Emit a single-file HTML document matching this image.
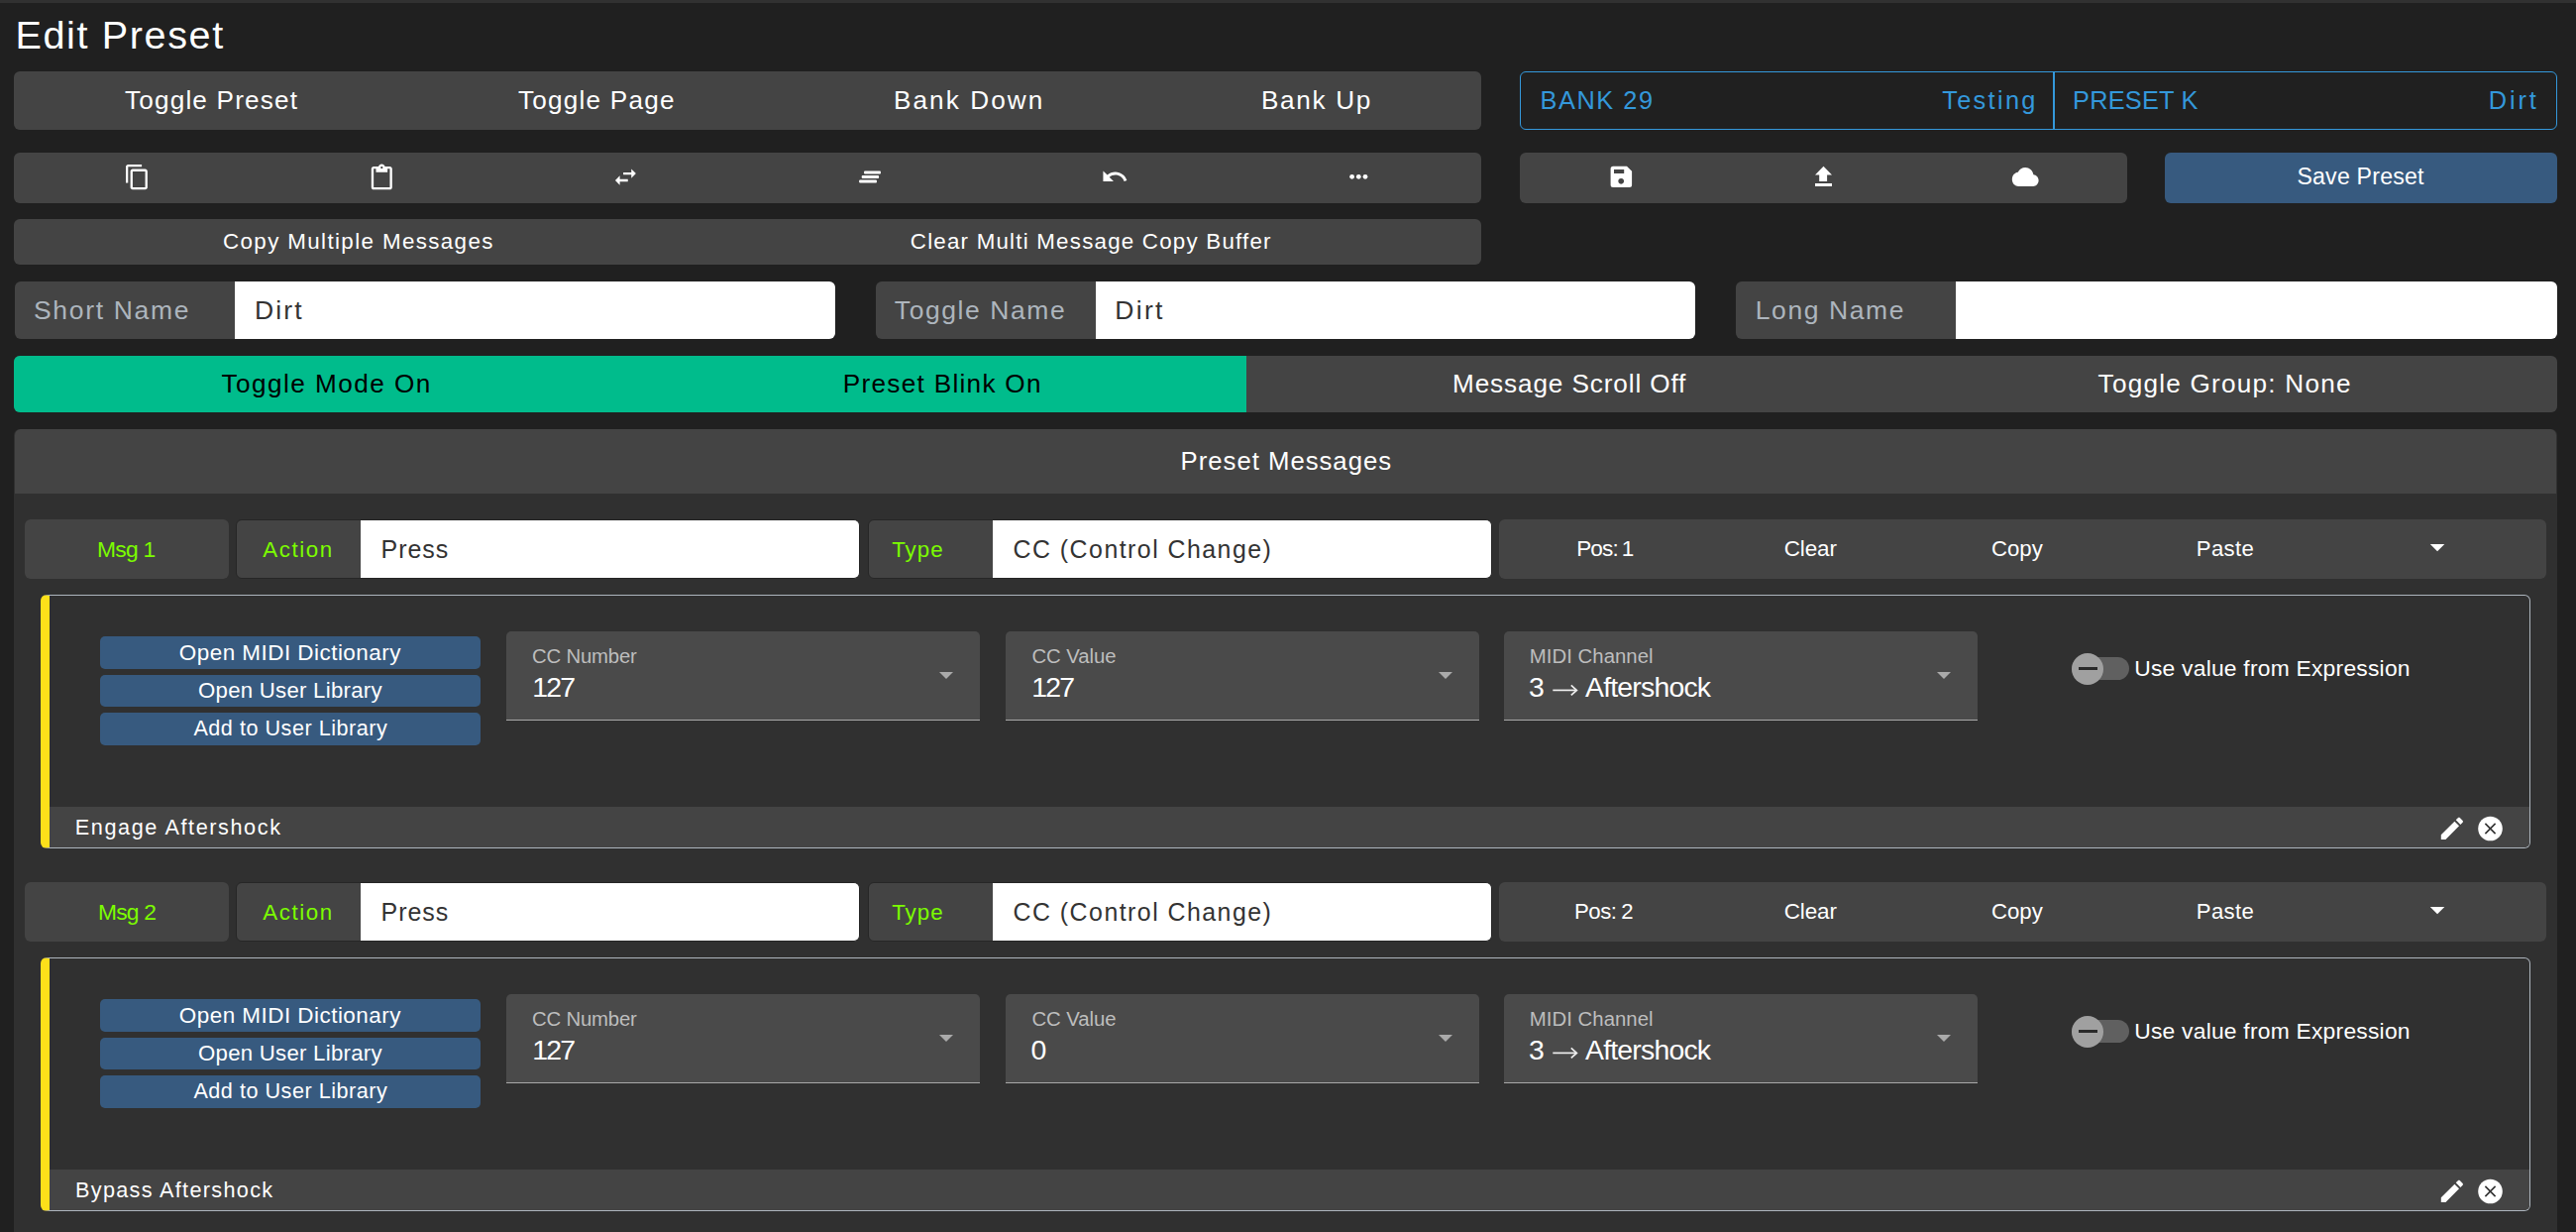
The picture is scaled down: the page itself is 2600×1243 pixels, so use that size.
<!DOCTYPE html>
<html><head><meta charset="utf-8">
<style>
*{box-sizing:border-box;margin:0;padding:0}
html,body{width:2600px;height:1243px;overflow:hidden;background:#202020;font-family:"Liberation Sans",sans-serif;color:#fff}
.a{position:absolute}
.t{position:absolute;white-space:nowrap;line-height:1}
svg.ov{position:absolute;left:0;top:0}
</style></head><body>
<div class="a" style="left:0px;top:0px;width:2600px;height:3px;background:#313131;border-radius:0;"></div>
<div class="t" style="left:15.40px;top:15.80px;font-size:39.59px;letter-spacing:1.620px;color:#fff">Edit Preset</div>
<div class="a" style="left:14px;top:72px;width:1481px;height:59px;background:#444;border-radius:6px;"></div>
<div class="t" style="left:126.00px;top:87.85px;font-size:26.16px;letter-spacing:1.167px;color:#fff">Toggle Preset</div>
<div class="t" style="left:523.00px;top:87.85px;font-size:26.16px;letter-spacing:1.200px;color:#fff">Toggle Page</div>
<div class="t" style="left:902.00px;top:87.85px;font-size:26.16px;letter-spacing:2.062px;color:#fff">Bank Down</div>
<div class="t" style="left:1273.00px;top:87.85px;font-size:26.16px;letter-spacing:1.667px;color:#fff">Bank Up</div>
<div class="a" style="left:1534px;top:72px;width:1047px;height:59px;background:transparent;border-radius:6px;border:1px solid #3498db"></div>
<div class="a" style="left:2072px;top:72px;width:2px;height:59px;background:#3498db;border-radius:0;"></div>
<div class="t" style="left:1554.60px;top:89.24px;font-size:25.35px;letter-spacing:1.533px;color:#3498db">BANK 29</div>
<div class="t" style="left:1960.20px;top:89.24px;font-size:25.35px;letter-spacing:2.317px;color:#3498db">Testing</div>
<div class="t" style="left:2092.00px;top:89.24px;font-size:25.35px;letter-spacing:0.229px;color:#3498db">PRESET K</div>
<div class="t" style="left:2511.80px;top:89.24px;font-size:25.35px;letter-spacing:2.867px;color:#3498db">Dirt</div>
<div class="a" style="left:14px;top:154px;width:1481px;height:51px;background:#444;border-radius:6px;"></div>
<div class="a" style="left:1534px;top:154px;width:613px;height:51px;background:#444;border-radius:6px;"></div>
<div class="a" style="left:2185px;top:154px;width:396px;height:51px;background:#375a7f;border-radius:6px;"></div>
<div class="t" style="left:2318.40px;top:167.02px;font-size:23.16px;letter-spacing:0.200px;color:#fff">Save Preset</div>
<div class="a" style="left:14px;top:221px;width:1481px;height:46px;background:#444;border-radius:6px;"></div>
<div class="t" style="left:225.00px;top:232.78px;font-size:22.35px;letter-spacing:1.381px;color:#fff">Copy Multiple Messages</div>
<div class="t" style="left:918.80px;top:232.78px;font-size:22.35px;letter-spacing:1.210px;color:#fff">Clear Multi Message Copy Buffer</div>
<div class="a" style="left:15px;top:284px;width:223px;height:58px;background:#444;border-radius:6px 0 0 6px;"></div>
<div class="a" style="left:237px;top:284px;width:606px;height:58px;background:#fff;border-radius:0 6px 6px 0;"></div>
<div class="a" style="left:884px;top:284px;width:223px;height:58px;background:#444;border-radius:6px 0 0 6px;"></div>
<div class="a" style="left:1106px;top:284px;width:605px;height:58px;background:#fff;border-radius:0 6px 6px 0;"></div>
<div class="a" style="left:1752px;top:284px;width:223px;height:58px;background:#444;border-radius:6px 0 0 6px;"></div>
<div class="a" style="left:1974px;top:284px;width:607px;height:58px;background:#fff;border-radius:0 6px 6px 0;"></div>
<div class="t" style="left:34.00px;top:300.11px;font-size:26.50px;letter-spacing:1.678px;color:#adb5bd">Short Name</div>
<div class="t" style="left:257.00px;top:300.11px;font-size:26.50px;letter-spacing:2.167px;color:#333">Dirt</div>
<div class="t" style="left:902.80px;top:300.11px;font-size:26.50px;letter-spacing:1.580px;color:#adb5bd">Toggle Name</div>
<div class="t" style="left:1125.20px;top:300.11px;font-size:26.50px;letter-spacing:2.333px;color:#333">Dirt</div>
<div class="t" style="left:1771.80px;top:300.11px;font-size:26.50px;letter-spacing:1.587px;color:#adb5bd">Long Name</div>
<div class="a" style="left:14px;top:359px;width:2567px;height:57px;background:#444;border-radius:6px;"></div>
<div class="a" style="left:14px;top:359px;width:1244px;height:57px;background:#00bc8c;border-radius:6px 0 0 6px;"></div>
<div class="t" style="left:223.60px;top:373.85px;font-size:26.16px;letter-spacing:1.446px;color:#000">Toggle Mode On</div>
<div class="t" style="left:850.80px;top:373.85px;font-size:26.16px;letter-spacing:1.286px;color:#000">Preset Blink On</div>
<div class="t" style="left:1466.00px;top:373.85px;font-size:26.16px;letter-spacing:0.876px;color:#fff">Message Scroll Off</div>
<div class="t" style="left:2117.60px;top:373.85px;font-size:26.16px;letter-spacing:1.224px;color:#fff">Toggle Group: None</div>
<div class="a" style="left:14px;top:433px;width:2567px;height:830px;background:#303030;border-radius:6px 6px 0 0;"></div>
<div class="a" style="left:15px;top:433px;width:2565px;height:65px;background:#444;border-radius:6px 6px 0 0;"></div>
<div class="t" style="left:1191.60px;top:452.59px;font-size:25.76px;letter-spacing:0.971px;color:#fff">Preset Messages</div>
<div class="a" style="left:0;top:524px;width:2600px;height:400px">
<div class="a" style="left:25px;top:0px;width:206px;height:60px;background:#444;border-radius:6px;"></div>
<div class="a" style="left:238px;top:0px;width:127px;height:60px;background:#444;border-radius:6px 0 0 6px;border:1px solid #262626"></div>
<div class="a" style="left:364px;top:0px;width:504px;height:60px;background:#fff;border-radius:0 6px 6px 0;border:1px solid #262626;border-left:0"></div>
<div class="a" style="left:876px;top:0px;width:127px;height:60px;background:#444;border-radius:6px 0 0 6px;border:1px solid #262626"></div>
<div class="a" style="left:1002px;top:0px;width:504px;height:60px;background:#fff;border-radius:0 6px 6px 0;border:1px solid #262626;border-left:0"></div>
<div class="a" style="left:1513px;top:0px;width:1057px;height:60px;background:#444;border-radius:6px;"></div>
<div class="a" style="left:41px;top:76px;width:2513px;height:256px;border:1px solid #adb5bd;border-left:9px solid #fde01a;border-radius:6px;overflow:hidden">
<div class="a" style="left:0px;top:213px;width:2504px;height:41px;background:#444;border-radius:0;"></div>
</div>
<div class="a" style="left:101px;top:118px;width:384px;height:33px;background:#375a7f;border-radius:5px;"></div>
<div class="a" style="left:101px;top:157px;width:384px;height:32px;background:#375a7f;border-radius:5px;"></div>
<div class="a" style="left:101px;top:195px;width:384px;height:33px;background:#375a7f;border-radius:5px;"></div>
<div class="a" style="left:511px;top:113px;width:478px;height:90px;background:#4a4a4a;border-radius:5px 5px 0 0;border-bottom:1px solid #a8a8a8"></div>
<div class="a" style="left:1015px;top:113px;width:478px;height:90px;background:#4a4a4a;border-radius:5px 5px 0 0;border-bottom:1px solid #a8a8a8"></div>
<div class="a" style="left:1518px;top:113px;width:478px;height:90px;background:#4a4a4a;border-radius:5px 5px 0 0;border-bottom:1px solid #a8a8a8"></div>
<div class="a" style="left:2091px;top:139px;width:58px;height:23px;background:#606060;border-radius:12px;"></div>
<div class="a" style="left:2091px;top:135px;width:32px;height:32px;background:#a0a0a0;border-radius:50%;"></div>
<div class="a" style="left:2098px;top:149px;width:19px;height:2.5px;background:#2a2a2a;border-radius:0;"></div>
</div>
<div class="t" style="left:98.00px;top:543.35px;font-size:22.86px;letter-spacing:-0.775px;color:#7cfc00">Msg 1</div>
<div class="t" style="left:265.20px;top:544.32px;font-size:22.35px;letter-spacing:1.600px;color:#7cfc00">Action</div>
<div class="t" style="left:384.60px;top:542.22px;font-size:24.98px;letter-spacing:0.925px;color:#333">Press</div>
<div class="t" style="left:900.20px;top:544.32px;font-size:22.35px;letter-spacing:1.000px;color:#7cfc00">Type</div>
<div class="t" style="left:1022.60px;top:542.19px;font-size:24.91px;letter-spacing:1.461px;color:#333">CC (Control Change)</div>
<div class="t" style="left:1591.20px;top:543.27px;font-size:22.60px;letter-spacing:-0.900px;color:#fff">Pos:</div>
<div class="t" style="left:1636.80px;top:542.98px;font-size:22.48px;letter-spacing:-14.100px;color:#fff">1</div>
<div class="t" style="left:1800.80px;top:543.12px;font-size:22.47px;letter-spacing:-0.150px;color:#fff">Clear</div>
<div class="t" style="left:2010.00px;top:543.48px;font-size:22.19px;letter-spacing:0.000px;color:#fff">Copy</div>
<div class="t" style="left:2216.80px;top:543.34px;font-size:22.15px;letter-spacing:0.350px;color:#fff">Paste</div>
<div class="t" style="left:180.80px;top:647.92px;font-size:22.46px;letter-spacing:0.474px;color:#fff">Open MIDI Dictionary</div>
<div class="t" style="left:200.00px;top:686.13px;font-size:22.21px;letter-spacing:0.256px;color:#fff">Open User Library</div>
<div class="t" style="left:195.40px;top:724.37px;font-size:21.61px;letter-spacing:0.511px;color:#fff">Add to User Library</div>
<div class="t" style="left:75.80px;top:824.38px;font-size:21.65px;letter-spacing:1.594px;color:#fff">Engage Aftershock</div>
<div class="t" style="left:537.00px;top:651.77px;font-size:20.35px;letter-spacing:-0.188px;color:#bdbdbd">CC Number</div>
<div class="t" style="left:1041.40px;top:651.77px;font-size:20.35px;letter-spacing:-0.057px;color:#bdbdbd">CC Value</div>
<div class="t" style="left:1543.80px;top:651.77px;font-size:20.35px;letter-spacing:0.036px;color:#bdbdbd">MIDI Channel</div>
<div class="t" style="left:537.20px;top:678.85px;font-size:28.43px;letter-spacing:-1.750px;color:#fff">127</div>
<div class="t" style="left:1041.20px;top:678.85px;font-size:28.43px;letter-spacing:-1.750px;color:#fff">127</div>
<div class="t" style="left:1543.00px;top:678.85px;font-size:28.43px;letter-spacing:-6.500px;color:#fff">3</div>
<div class="t" style="left:1600.00px;top:678.85px;font-size:28.43px;letter-spacing:-0.800px;color:#fff">Aftershock</div>
<div class="t" style="left:2154.20px;top:663.43px;font-size:22.86px;letter-spacing:0.217px;color:#fff">Use value from Expression</div>
<div class="a" style="left:0;top:890px;width:2600px;height:400px">
<div class="a" style="left:25px;top:0px;width:206px;height:60px;background:#444;border-radius:6px;"></div>
<div class="a" style="left:238px;top:0px;width:127px;height:60px;background:#444;border-radius:6px 0 0 6px;border:1px solid #262626"></div>
<div class="a" style="left:364px;top:0px;width:504px;height:60px;background:#fff;border-radius:0 6px 6px 0;border:1px solid #262626;border-left:0"></div>
<div class="a" style="left:876px;top:0px;width:127px;height:60px;background:#444;border-radius:6px 0 0 6px;border:1px solid #262626"></div>
<div class="a" style="left:1002px;top:0px;width:504px;height:60px;background:#fff;border-radius:0 6px 6px 0;border:1px solid #262626;border-left:0"></div>
<div class="a" style="left:1513px;top:0px;width:1057px;height:60px;background:#444;border-radius:6px;"></div>
<div class="a" style="left:41px;top:76px;width:2513px;height:256px;border:1px solid #adb5bd;border-left:9px solid #fde01a;border-radius:6px;overflow:hidden">
<div class="a" style="left:0px;top:213px;width:2504px;height:41px;background:#444;border-radius:0;"></div>
</div>
<div class="a" style="left:101px;top:118px;width:384px;height:33px;background:#375a7f;border-radius:5px;"></div>
<div class="a" style="left:101px;top:157px;width:384px;height:32px;background:#375a7f;border-radius:5px;"></div>
<div class="a" style="left:101px;top:195px;width:384px;height:33px;background:#375a7f;border-radius:5px;"></div>
<div class="a" style="left:511px;top:113px;width:478px;height:90px;background:#4a4a4a;border-radius:5px 5px 0 0;border-bottom:1px solid #a8a8a8"></div>
<div class="a" style="left:1015px;top:113px;width:478px;height:90px;background:#4a4a4a;border-radius:5px 5px 0 0;border-bottom:1px solid #a8a8a8"></div>
<div class="a" style="left:1518px;top:113px;width:478px;height:90px;background:#4a4a4a;border-radius:5px 5px 0 0;border-bottom:1px solid #a8a8a8"></div>
<div class="a" style="left:2091px;top:139px;width:58px;height:23px;background:#606060;border-radius:12px;"></div>
<div class="a" style="left:2091px;top:135px;width:32px;height:32px;background:#a0a0a0;border-radius:50%;"></div>
<div class="a" style="left:2098px;top:149px;width:19px;height:2.5px;background:#2a2a2a;border-radius:0;"></div>
</div>
<div class="t" style="left:128.15px;top:908.68px;font-size:22.82px;letter-spacing:-0.775px;color:#7cfc00;transform:translateX(-50%)">Msg 2</div>
<div class="t" style="left:265.20px;top:910.32px;font-size:22.35px;letter-spacing:1.600px;color:#7cfc00">Action</div>
<div class="t" style="left:384.60px;top:908.22px;font-size:24.98px;letter-spacing:0.925px;color:#333">Press</div>
<div class="t" style="left:900.20px;top:910.32px;font-size:22.35px;letter-spacing:1.000px;color:#7cfc00">Type</div>
<div class="t" style="left:1022.60px;top:908.19px;font-size:24.91px;letter-spacing:1.461px;color:#333">CC (Control Change)</div>
<div class="t" style="left:1589.00px;top:909.33px;font-size:22.21px;letter-spacing:-0.483px;color:#fff">Pos:</div>
<div class="t" style="left:1636.20px;top:909.35px;font-size:22.18px;letter-spacing:-0.800px;color:#fff">2</div>
<div class="t" style="left:1800.80px;top:909.12px;font-size:22.47px;letter-spacing:-0.150px;color:#fff">Clear</div>
<div class="t" style="left:2010.00px;top:909.48px;font-size:22.19px;letter-spacing:0.000px;color:#fff">Copy</div>
<div class="t" style="left:2216.80px;top:909.34px;font-size:22.15px;letter-spacing:0.350px;color:#fff">Paste</div>
<div class="t" style="left:180.80px;top:1013.92px;font-size:22.46px;letter-spacing:0.474px;color:#fff">Open MIDI Dictionary</div>
<div class="t" style="left:200.00px;top:1052.13px;font-size:22.21px;letter-spacing:0.256px;color:#fff">Open User Library</div>
<div class="t" style="left:195.40px;top:1090.37px;font-size:21.61px;letter-spacing:0.511px;color:#fff">Add to User Library</div>
<div class="t" style="left:76.00px;top:1190.38px;font-size:21.65px;letter-spacing:1.319px;color:#fff">Bypass Aftershock</div>
<div class="t" style="left:537.00px;top:1017.77px;font-size:20.35px;letter-spacing:-0.188px;color:#bdbdbd">CC Number</div>
<div class="t" style="left:1041.40px;top:1017.77px;font-size:20.35px;letter-spacing:-0.057px;color:#bdbdbd">CC Value</div>
<div class="t" style="left:1543.80px;top:1017.77px;font-size:20.35px;letter-spacing:0.036px;color:#bdbdbd">MIDI Channel</div>
<div class="t" style="left:537.20px;top:1044.85px;font-size:28.43px;letter-spacing:-1.750px;color:#fff">127</div>
<div class="t" style="left:1040.60px;top:1044.85px;font-size:28.43px;letter-spacing:-16.500px;color:#fff">0</div>
<div class="t" style="left:1543.00px;top:1044.85px;font-size:28.43px;letter-spacing:-6.500px;color:#fff">3</div>
<div class="t" style="left:1600.00px;top:1044.85px;font-size:28.43px;letter-spacing:-0.800px;color:#fff">Aftershock</div>
<div class="t" style="left:2154.20px;top:1029.43px;font-size:22.86px;letter-spacing:0.217px;color:#fff">Use value from Expression</div>
<svg class="ov" width="2600" height="1243" viewBox="0 0 2600 1243" fill="#fff"><path transform="translate(124.7,164.85) scale(1.15)" d="M16 1H4c-1.1 0-2 .9-2 2v14h2V3h12V1zm3 4H8c-1.1 0-2 .9-2 2v14c0 1.1.9 2 2 2h11c1.1 0 2-.9 2-2V7c0-1.1-.9-2-2-2zm0 16H8V7h11v14z"/><path transform="translate(371.3,165.6) scale(1.167)" d="M19 2h-4.18C14.4.84 13.3 0 12 0c-1.3 0-2.4.84-2.82 2H5c-1.1 0-2 .9-2 2v16c0 1.1.9 2 2 2h14c1.1 0 2-.9 2-2V4c0-1.1-.9-2-2-2zm-7 0c.55 0 1 .45 1 1s-.45 1-1 1-1-.45-1-1 .45-1 1-1zm7 18H5V4h2v3h10V4h2v16z"/><path transform="translate(617.5,164.6) scale(1.16)" d="M6.99 11L3 15l3.99 4v-3H14v-2H6.99v-3zM21 9l-3.99-4v3H10v2h7.01v3L21 9z"/><rect x="872" y="172.4" width="17" height="3" rx="1"/><rect x="869.7" y="177" width="17.4" height="3" rx="1"/><rect x="867.1" y="181.5" width="17.9" height="3" rx="1"/><path transform="translate(1111.1,164.2) scale(1.17)" d="M12.5 8c-2.65 0-5.050.99-6.9 2.6L2 7v9h9l-3.62-3.62c1.39-1.16 3.16-1.88 5.12-1.88 3.54 0 6.55 2.31 7.6 5.5l2.37-.78C21.08 11.03 17.15 8 12.5 8z"/><circle cx="1364.6" cy="178.3" r="2.4"/><circle cx="1371.3" cy="178.3" r="2.4"/><circle cx="1378" cy="178.3" r="2.4"/><path fill-rule="evenodd" d="M1625.6 170.2a2.5 2.5 0 0 1 2.5-2.5H1642L1647.1 172.8V186.5a2.5 2.5 0 0 1-2.5 2.5H1628.1a2.5 2.5 0 0 1-2.5-2.5Z M1629 171.1H1639.2V174.9H1629Z M1636.2 179.9a2.9 2.9 0 1 0 0.01 0Z"/><path d="M1836.2 183H1844.1V176.5H1849L1840.5 167.7L1832 176.5H1836.2Z M1832 184.9H1849V188H1832Z"/><path transform="translate(2030.8,169) scale(1.117,1.19) translate(0,-4)" d="M19.35 10.04C18.67 6.59 15.64 4 12 4 9.11 4 6.6 5.64 5.35 8.040 2.34 8.36 0 10.91 0 14c0 3.31 2.69 6 6 6h13c2.76 0 5-2.24 5-5 0-2.640-2.05-4.78-4.65-4.96z"/><g transform="translate(0,0)"><path d="M2452.8 549H2467.3L2460.05 556.3Z"/><path fill="#aaa" d="M948 678h14l-7 7z"/><path fill="#aaa" d="M1452 678h14l-7 7z"/><path fill="#aaa" d="M1955 678h14l-7 7z"/><path d="M1567.3 696.4H1590" stroke="#eee" stroke-width="1.7"/><path d="M1585.8 691.4L1591.4 696.4L1585.8 701.4" fill="none" stroke="#eee" stroke-width="1.7"/><path transform="translate(2460.1,821) scale(1.233)" d="M3 17.25V21h3.75L17.81 9.94l-3.75-3.75L3 17.25zM20.71 7.04c.39-.39.39-1.02 0-1.41l-2.34-2.34c-.39-.39-1.02-.39-1.41 0l-1.83 1.83 3.75 3.75 1.83-1.83z"/><circle cx="2513.5" cy="836" r="12.3"/><path d="M2508.4 830.9L2518.6 841.1M2518.6 830.9L2508.4 841.1" stroke="#333" stroke-width="1.6"/></g><g transform="translate(0,366)"><path d="M2452.8 549H2467.3L2460.05 556.3Z"/><path fill="#aaa" d="M948 678h14l-7 7z"/><path fill="#aaa" d="M1452 678h14l-7 7z"/><path fill="#aaa" d="M1955 678h14l-7 7z"/><path d="M1567.3 696.4H1590" stroke="#eee" stroke-width="1.7"/><path d="M1585.8 691.4L1591.4 696.4L1585.8 701.4" fill="none" stroke="#eee" stroke-width="1.7"/><path transform="translate(2460.1,821) scale(1.233)" d="M3 17.25V21h3.75L17.81 9.94l-3.75-3.75L3 17.25zM20.71 7.04c.39-.39.39-1.02 0-1.41l-2.34-2.34c-.39-.39-1.02-.39-1.41 0l-1.83 1.83 3.75 3.75 1.83-1.83z"/><circle cx="2513.5" cy="836" r="12.3"/><path d="M2508.4 830.9L2518.6 841.1M2518.6 830.9L2508.4 841.1" stroke="#333" stroke-width="1.6"/></g></svg>
</body></html>
